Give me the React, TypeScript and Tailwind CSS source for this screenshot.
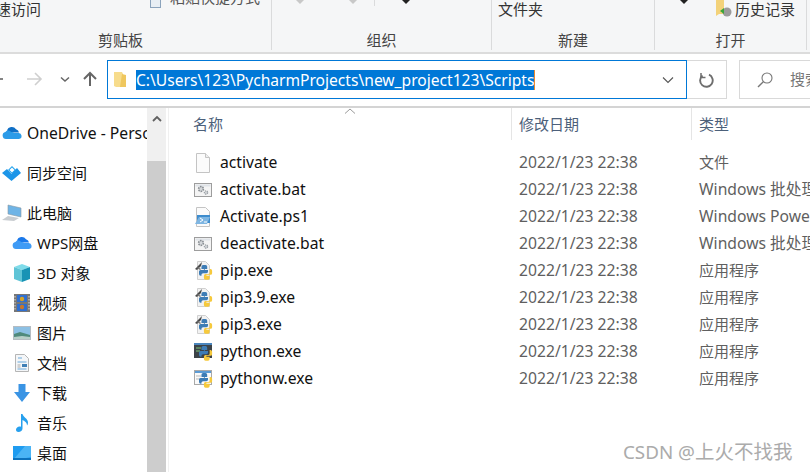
import React from 'react';

const files = [
  { name: 'activate', type: '文件', icon: 'blank' },
  { name: 'activate.bat', type: 'Windows 批处理文件', icon: 'bat' },
  { name: 'Activate.ps1', type: 'Windows PowerShell', icon: 'ps' },
  { name: 'deactivate.bat', type: 'Windows 批处理文件', icon: 'bat' },
  { name: 'pip.exe', type: '应用程序', icon: 'pip' },
  { name: 'pip3.9.exe', type: '应用程序', icon: 'pip' },
  { name: 'pip3.exe', type: '应用程序', icon: 'pip' },
  { name: 'python.exe', type: '应用程序', icon: 'python' },
  { name: 'pythonw.exe', type: '应用程序', icon: 'pythonw' },
];

const PySnake = ({ x = 0, y = 0 }: { x?: number; y?: number }) => (
  <g transform={`translate(${x} ${y})`}>
    <path d="M5 0h3a2 2 0 0 1 2 2v3H6v1h5v-1a0 0 0 0 0 0 0v3a2 2 0 0 1-2 2H5a2 2 0 0 0-2 2v1H2a2 2 0 0 1-2-2V8a2 2 0 0 1 2-2h5V5H3V2a2 2 0 0 1 2-2z" fill="#3d7cb5" />
    <path d="M13 5h1a2 2 0 0 1 2 2v3a2 2 0 0 1-2 2H9v1h4v3a2 2 0 0 1-2 2H8a2 2 0 0 1-2-2v-3a2 2 0 0 1 2-2h3a2 2 0 0 0 2-2z" fill="#f6c93c" />
  </g>
);

const FileIcon = ({ kind }: { kind: string }) => {
  if (kind === 'blank') {
    return (
      <svg width="18" height="20" viewBox="0 0 18 20">
        <path d="M2.5.5h9l4 4v15h-13z" fill="#fbfbfb" stroke="#c4c4c4" />
        <path d="M11.5.5v4h4" fill="#eee" stroke="#c4c4c4" />
      </svg>
    );
  }
  if (kind === 'bat') {
    return (
      <svg width="18" height="20" viewBox="0 0 18 20">
        <rect x="0.5" y="3.5" width="17" height="13" fill="#f4f4f4" stroke="#9d9d9d" />
        <rect x="1.5" y="4.5" width="15" height="2" fill="#dfe3e8" />
        <circle cx="7" cy="9" r="2.4" fill="#d4d7da" stroke="#8a8f94" strokeWidth="1.6" strokeDasharray="1.5 0.8" />
        <circle cx="12" cy="12.5" r="1.6" fill="#d4d7da" stroke="#9aa0a5" strokeWidth="1.300" strokeDasharray="1.2 0.7" />
      </svg>
    );
  }
  if (kind === 'ps') {
    return (
      <svg width="18" height="20" viewBox="0 0 18 20">
        <path d="M2.5.5h9l4 4v15h-13z" fill="#fbfbfb" stroke="#c4c4c4" />
        <path d="M3 8h13v8H3z" fill="#3e8ccd" />
        <path d="M1 17l4-7h11l-3 7z" fill="#7fb6e2" />
        <path d="M6 11l3 2-3 2" fill="none" stroke="#fff" strokeWidth="1" />
        <path d="M10 15h3" stroke="#fff" strokeWidth="1" />
      </svg>
    );
  }
  if (kind === 'pip') {
    return (
      <svg width="20" height="20" viewBox="0 0 20 20">
        <path d="M3.5.5h8l4 4v14h-12z" fill="#f2f2f2" stroke="#d0d0d0" />
        <path d="M1 8l5-5 2-2-1 4-4 4z" fill="#4a4a4a" />
        <path d="M4 6l3 2-1 1-3-2z" fill="#777" />
        <g transform="translate(5 4) scale(0.82)">
          <PySnake />
        </g>
      </svg>
    );
  }
  if (kind === 'python') {
    return (
      <svg width="20" height="20" viewBox="0 0 20 20">
        <rect x="0" y="1" width="18" height="15" fill="#3c4348" />
        <rect x="0" y="1" width="18" height="2" fill="#4b86bd" />
        <path d="M2 6h5M2 9h4" stroke="#7ec77b" strokeWidth="1" />
        <g transform="translate(5 4) scale(0.82)">
          <PySnake />
        </g>
      </svg>
    );
  }
  return (
    <svg width="20" height="20" viewBox="0 0 20 20">
      <rect x="0.5" y="1.5" width="17" height="14" fill="#fafafa" stroke="#a9a9a9" />
      <rect x="1" y="2" width="16" height="2" fill="#5b9bd5" />
      <path d="M2 7h5M2 10h4" stroke="#b9b9b9" strokeWidth="1" />
      <g transform="translate(5 4) scale(0.82)">
        <PySnake />
      </g>
    </svg>
  );
};

const Cloud = ({ color = '#0f6fc6', light = '#2c9be8' }: { color?: string; light?: string }) => (
  <svg width="20" height="14" viewBox="0 0 20 14">
    <path d="M5 4.5A5 5 0 0 1 14 3.2 4 4 0 0 1 17 6.5H8z" fill={color} />
    <path d="M4 13a3.6 3.6 0 0 1-.6-7.1A3.6 3.6 0 0 1 9 6a3 3 0 0 1 3 1h4a3 3 0 0 1 1 6z" fill={light} />
  </svg>
);

const NavIcon = ({ kind }: { kind: string }) => {
  switch (kind) {
    case 'onedrive':
      return <Cloud />;
    case 'sync':
      return (
        <svg width="19" height="16" viewBox="0 0 19 16">
          <path d="M10 1l4 4-4 4-4-4z" fill="#23a3ee" />
          <path d="M5 4l4.500 5L14 4l1-1 4 5-9.500 8L0 8z" fill="#1c95e8" />
          <path d="M10 2.500L12.500 5 10 7.500 7.500 5z" fill="#fff" />
        </svg>
      );
    case 'pc':
      return (
        <svg width="20" height="18" viewBox="0 0 20 18">
          <path d="M6 1l13 3v9L6 10z" fill="#6fb4e6" stroke="#8a98a3" strokeWidth="0.6" />
          <path d="M0 16l6-4 11 2-5 3z" fill="#c9cdd1" />
        </svg>
      );
    case 'wps':
      return <Cloud color="#1a78ea" light="#3f9bf5" />;
    case 'cube':
      return (
        <svg width="18" height="18" viewBox="0 0 18 18">
          <path d="M9 0l8 3-8 3-8-3z" fill="#7fdcea" />
          <path d="M1 3l8 3v12l-8-3z" fill="#5fc4d6" />
          <path d="M17 3L9 6v12l8-3z" fill="#1893b5" />
        </svg>
      );
    case 'video':
      return (
        <svg width="16" height="18" viewBox="0 0 16 18">
          <rect width="16" height="18" fill="#777" />
          <rect x="3" y="1" width="10" height="7" fill="#2f6fd0" />
          <rect x="3" y="10" width="10" height="7" fill="#2f6fd0" />
          <circle cx="8" cy="5" r="2.2" fill="#d6a327" />
          <circle cx="8" cy="13" r="2.2" fill="#c9772a" />
          <path d="M1 2v14M15 2v14" stroke="#ddd" strokeWidth="1" strokeDasharray="1.5 1.5" />
        </svg>
      );
    case 'pic':
      return (
        <svg width="18" height="14" viewBox="0 0 18 14">
          <rect width="18" height="14" fill="#b5bcc2" />
          <rect x="1" y="1" width="16" height="12" fill="#8cc0e4" />
          <path d="M1 8l6-2 10 3v4H1z" fill="#4f8a7c" />
          <path d="M1 11l8-1 8 1v2H1z" fill="#b8cfc8" />
        </svg>
      );
    case 'doc':
      return (
        <svg width="14" height="18" viewBox="0 0 14 18">
          <path d="M.5.5h9l4 4v13H.5z" fill="#f4f6f8" stroke="#b5b5b5" />
          <path d="M3 4h4M2.5 8h9M2.5 15h9" stroke="#6aa9da" />
          <rect x="7" y="10" width="5" height="3" fill="#3f7fb5" />
          <path d="M2.5 11h3M2.5 13h3" stroke="#aaa" />
        </svg>
      );
    case 'down':
      return (
        <svg width="16" height="18" viewBox="0 0 16 18">
          <path d="M4.5 0h7v8H16l-8 10-8-10h4.5z" fill="#3a94e4" />
        </svg>
      );
    case 'music':
      return (
        <svg width="13" height="18" viewBox="0 0 13 18">
          <path d="M5 0h1.5c.5 3 5.5 4.500 5.500 8.500 0 1.500-.5 2.500-1 3 .2-3-2.500-4.500-4.500-5.500V14.500C6.500 16.500 4.500 18 2.500 18S0 17 0 15.500 1.800 12.500 3.500 12.500c.6 0 1.100.1 1.500.3z" fill="#27a0ee" />
        </svg>
      );
    default:
      return (
        <svg width="18" height="14" viewBox="0 0 18 14">
          <rect width="18" height="14" fill="#1f9cf0" />
          <path d="M0 14L12 0h6v11L3 14z" fill="#4bb4f5" />
          <rect y="12" width="18" height="2" fill="#0d72bd" />
        </svg>
      );
  }
};

const TopItem = ({ kind, children }: { kind: string; children: React.ReactNode }) => (
  <div className="h-[30px] flex items-center">
    <div className="w-[27px] pl-[2px] shrink-0 flex">
      <NavIcon kind={kind} />
    </div>
    <span className="whitespace-nowrap">{children}</span>
  </div>
);

const SubItem = ({ kind, label }: { kind: string; label: string }) => (
  <div className="h-[30px] flex items-center">
    <div className="w-[37px] pl-[12px] shrink-0">
      <div className="w-[20px] flex items-center justify-center">
        <NavIcon kind={kind} />
      </div>
    </div>
    <span className="whitespace-nowrap">{label}</span>
  </div>
);

const RibbonGroup = ({
  label,
  width,
  labelClass = '',
  children,
}: {
  label: string;
  width: string;
  labelClass?: string;
  children?: React.ReactNode;
}) => (
  <div className={`${width} h-[50px] shrink-0 flex flex-col border-r border-[#dadbdc]`}>
    <div className="h-[30px] relative overflow-hidden">{children}</div>
    <div className={`h-[20px] flex items-center justify-center text-[15px] text-[#444] ${labelClass}`}>{label}</div>
  </div>
);

export default function App() {
  return (
    <div
      className="relative w-[810px] h-[472px] overflow-hidden bg-white text-[15px] text-[#111] flex flex-col"
      style={{ fontFamily: '"Noto Sans", "Noto Sans CJK SC", sans-serif' }}
    >
      {/* ribbon */}
      <div className="h-[54px] shrink-0 bg-[#f5f6f7] border-b-2 border-[#dcdcdc] flex">
        <RibbonGroup label="剪贴板" width="w-[272px]" labelClass="pr-[30px]">
          <span className="absolute left-[-4px] top-[-2px] text-[15px] text-[#333] whitespace-nowrap">速访问</span>
          <span className="absolute left-[150px] top-[-1px] w-[11px] h-[9px] border border-[#8ba3bc] bg-[#e8eef4]" />
          <span className="absolute left-[170px] top-[-14px] text-[15px] text-[#555] whitespace-nowrap">粘贴快捷方式</span>
        </RibbonGroup>
        <RibbonGroup label="组织" width="w-[220px]">
          <span className="absolute left-[24px] top-[0px] border-x-[4px] border-t-[4px] border-x-transparent border-t-[#c8c8c8]" />
          <span className="absolute left-[77px] top-[0px] border-x-[4px] border-t-[4px] border-x-transparent border-t-[#c8c8c8]" />
          <span className="absolute left-[102px] top-0 w-[1px] h-[6px] bg-[#dadbdc]" />
          <span className="absolute left-[130px] top-[0px] border-x-[4px] border-t-[4px] border-x-transparent border-t-[#222]" />
        </RibbonGroup>
        <RibbonGroup label="新建" width="w-[163px]">
          <span className="absolute left-[6px] top-[-2px] text-[15px] text-[#333] whitespace-nowrap">文件夹</span>
        </RibbonGroup>
        <RibbonGroup label="打开" width="w-[152px]">
          <span className="absolute left-[25px] top-[0px] border-x-[4px] border-t-[4px] border-x-transparent border-t-[#222]" />
          <svg className="absolute left-[60px] top-[0px]" width="18" height="18" viewBox="0 0 18 18">
            <path d="M1 0h8v14H4l-3 2z" fill="#f3d27a" />
            <circle cx="12" cy="12" r="4.500" fill="#9b9b9b" />
            <path d="M5 11l4-3v6z" fill="#3aa53a" />
          </svg>
          <span className="absolute left-[80px] top-[-2px] text-[15px] text-[#333] whitespace-nowrap">历史记录</span>
        </RibbonGroup>
      </div>

      {/* address bar */}
      <div className="h-[54px] shrink-0 border-b-2 border-[#d4d4d4] flex items-center">
        <div className="w-[107px] h-full shrink-0 flex items-center pb-[2px]">
          <svg width="107" height="20" viewBox="0 0 107 20">
            <path d="M-4 10h7" stroke="#666" strokeWidth="1.6" />
            <path d="M27 10h14M35 4l6 6-6 6" fill="none" stroke="#cfcfcf" strokeWidth="1.6" />
            <path d="M61 8.500l4 3.500 4-3.500" fill="none" stroke="#666" strokeWidth="1.500" />
            <path d="M90 17V4M84 10l6-6 6 6" fill="none" stroke="#666" strokeWidth="2" />
          </svg>
        </div>
        <div className="w-[580px] h-[39px] mb-[1px] shrink-0 border border-[#0078d7] flex items-center">
          <svg className="ml-[6px] shrink-0" width="13" height="17" viewBox="0 0 13 17">
            <path d="M0 1h8l1 2v13H2l-2-1z" fill="#f7dc8c" />
            <path d="M8 3l4 1v12H6z" fill="#efc75e" />
          </svg>
          <span className="ml-[9px] h-[20px] leading-[20px] bg-[#0078d7] text-white whitespace-nowrap border-r border-[#e8892e] text-[15.6px]">
            C:\Users\123\PycharmProjects\new_project123\Scripts
          </span>
          <svg className="ml-auto mr-[12px]" width="12" height="8" viewBox="0 0 12 8">
            <path d="M1 1.500l5 5 5-5" fill="none" stroke="#555" strokeWidth="1.100" />
          </svg>
        </div>
        <div className="w-[40px] h-[39px] mb-[1px] shrink-0 border border-l-0 border-[#d9d9d9] flex items-center justify-center">
          <svg width="16" height="16" viewBox="0 0 16 16">
            <path d="M10 2.700A6.300 6.300 0 1 1 3.500 3.500" fill="none" stroke="#6e6e6e" strokeWidth="1.900" />
            <path d="M2 1v4.500h4.500" fill="none" stroke="#6e6e6e" strokeWidth="1.500" />
          </svg>
        </div>
        <div className="w-[90px] h-[39px] mb-[1px] ml-[12px] shrink-0 border border-[#d9d9d9] flex items-center pl-[17px]">
          <svg width="16" height="16" viewBox="0 0 16 16">
            <circle cx="10" cy="6" r="5" fill="none" stroke="#777" strokeWidth="1.100" />
            <path d="M6.300 9.700L1 15" stroke="#777" strokeWidth="1.400" />
          </svg>
          <span className="ml-[17px] text-[#777] whitespace-nowrap">搜索</span>
        </div>
      </div>

      <div className="flex-1 flex min-h-0">
        {/* left tree */}
        <div className="w-[147px] shrink-0 overflow-hidden pt-[10px]">
          <TopItem kind="onedrive">
            <span className="block pt-[2px] text-[15.7px]">OneDrive - Personal</span>
          </TopItem>
          <div className="h-[10px]" />
          <TopItem kind="sync">同步空间</TopItem>
          <div className="h-[10px]" />
          <TopItem kind="pc">此电脑</TopItem>
          <SubItem kind="wps" label="WPS网盘" />
          <SubItem kind="cube" label="3D 对象" />
          <SubItem kind="video" label="视频" />
          <SubItem kind="pic" label="图片" />
          <SubItem kind="doc" label="文档" />
          <SubItem kind="down" label="下载" />
          <SubItem kind="music" label="音乐" />
          <SubItem kind="desk" label="桌面" />
        </div>

        {/* scrollbar */}
        <div className="w-[19px] shrink-0 flex flex-col bg-[#f0f0f0]">
          <div className="h-[53px] flex justify-center pt-[7px]">
            <svg width="10" height="7" viewBox="0 0 10 7">
              <path d="M1 6l4-4 4 4" fill="none" stroke="#606060" strokeWidth="1.800" />
            </svg>
          </div>
          <div className="flex-1 bg-[#cdcdcd]" />
        </div>
        <div className="w-[3px] shrink-0 border-r border-[#f0f0f0]" />

        {/* file list */}
        <div className="flex-1 min-w-0 overflow-hidden">
          <div className="relative h-[32px] flex text-[#4c607a]">
            <div className="w-[343px] shrink-0 pl-[24px] border-r border-[#e5e5e5] flex items-center">名称</div>
            <div className="w-[180px] shrink-0 pl-[7px] border-r border-[#e5e5e5] flex items-center">修改日期</div>
            <div className="pl-[7px] flex items-center">类型</div>
            <svg className="absolute left-[175px] top-[0px]" width="12" height="6" viewBox="0 0 12 6">
              <path d="M1 5.500l5-4.500 5 4.500" fill="none" stroke="#9a9a9a" strokeWidth="1" />
            </svg>
          </div>
          <div className="pt-[9px]">
            {files.map((file) => (
              <div key={file.name} className="h-[27px] flex items-center whitespace-nowrap">
                <div className="w-[51px] pl-[25px] shrink-0 flex items-center">
                  <FileIcon kind={file.icon} />
                </div>
                <div className="w-[299px] shrink-0 text-[15.7px]">{file.name}</div>
                <div className="w-[180px] shrink-0 text-[#5f5f5f] text-[15.7px]">2022/1/23 22:38</div>
                <div className={file.type.startsWith('Windows') ? 'text-[#5f5f5f] text-[15.7px]' : 'text-[#5f5f5f]'}>
                  {file.type}
                </div>
              </div>
            ))}
          </div>
        </div>
      </div>

      {/* watermark */}
      <div className="absolute left-[623px] top-[440px] text-[19.5px] leading-[24px] text-[#ababab] whitespace-nowrap">
        <span className="text-[18.8px]">CSDN @</span>上火不找我
      </div>
    </div>
  );
}
